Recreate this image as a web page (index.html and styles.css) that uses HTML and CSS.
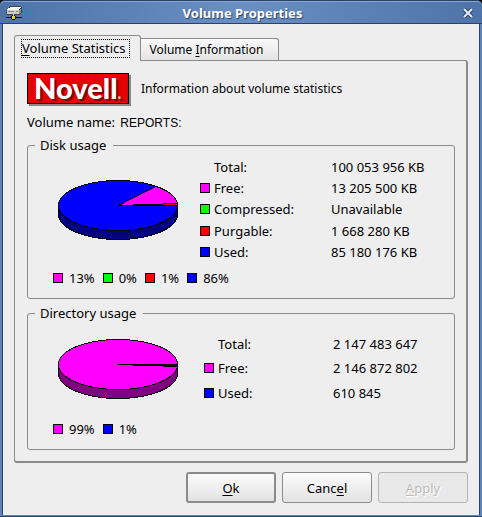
FILE: index.html
```html
<!DOCTYPE html>
<html lang="en">
<head>
<meta charset="utf-8">
<title>Volume Properties</title>
<link rel="stylesheet" href="styles.css">
</head>
<body>
<div class="window">
  <header class="titlebar">
    <svg class="app-icon" width="16" height="14" viewBox="0 0 16 14" shape-rendering="crispEdges" aria-hidden="true">
      <path d="M2 2h1V1h1V0h11v1h1v6h-1v1h-1v1H1V8H0V4h1V3h1z" fill="#444"/>
      <path d="M4 1h11v1h-1v1h-1v1H1V3h1V2h2z" fill="#f4f4f4"/>
      <path d="M1 4h12v4H1z" fill="#cfcfcf"/>
      <path d="M13 4h1V3h1v4h-1v1h-1z" fill="#8a8a8a"/>
      <path d="M2 5h6v1H2z" fill="#888"/>
      <path d="M10 5h2v1h-2z" fill="#0d0"/>
      <path d="M0 11h16v1H0zM6 9h3v1h1v3H9v1H6v-1H5v-3h1z" fill="#111"/>
      <path d="M7 8h1v2H7z" fill="#ccc"/>
      <path d="M6 10h3v3H6z" fill="#e8d820"/>
    </svg>
    <h1>Volume Properties</h1>
    <button class="close" type="button" aria-label="Close">
      <svg width="10" height="10" viewBox="0 0 10 10" aria-hidden="true">
        <path d="M1 1l8 8M9 1l-8 8" stroke="#2c466f" stroke-width="4"/>
        <path d="M1 1l8 8M9 1l-8 8" stroke="#e6ecf6" stroke-width="2"/>
      </svg>
    </button>
  </header>
  <main class="content">
    <div class="tabs" role="tablist">
      <button class="tab active" type="button" role="tab" aria-selected="true"><span class="focus"><u>V</u>olume Statistics</span></button>
      <button class="tab" type="button" role="tab" aria-selected="false">Volume <u>I</u>nformation</button>
    </div>
    <section class="panel">
      <div class="intro">
        <span class="logo">Novell<small>.</small></span>
        <span>Information about volume statistics</span>
      </div>
      <p class="name">Volume name: <span class="volume">REPORTS:</span></p>

      <fieldset class="disk">
        <legend>Disk usage</legend>
        <div class="usage">
          <svg class="pie" width="121" height="60" viewBox="0 0 121 60" shape-rendering="crispEdges" role="img" aria-label="Disk usage chart">
            <path d="M.5 25.5v9a59.500 25 0 0 0 119 0v-9z" fill="#000080" stroke="#000"/>
            <ellipse cx="60" cy="25.500" rx="59.500" ry="25" fill="#00f" stroke="#000"/>
            <path d="M60.500 25.500L98 6.500A59.500 25 0 0 1 119.500 25.500z" fill="#f0f" stroke="#000"/>
            <path d="M75 24h45v2H75z" fill="#000"/>
            <path d="M105 23h15v1h-15z" fill="#000"/>
            <path d="M105 24h14v1h-14z" fill="#f00"/>
          </svg>
          <table>
            <tr><td></td><th scope="row">Total:</th><td>100 053 956 KB</td></tr>
            <tr><td><i class="swatch free"></i></td><th scope="row">Free:</th><td>13 205 500 KB</td></tr>
            <tr><td><i class="swatch compressed"></i></td><th scope="row">Compressed:</th><td>Unavailable</td></tr>
            <tr><td><i class="swatch purgable"></i></td><th scope="row">Purgable:</th><td>1 668 280 KB</td></tr>
            <tr><td><i class="swatch used"></i></td><th scope="row">Used:</th><td>85 180 176 KB</td></tr>
          </table>
        </div>
        <ul class="keys">
          <li><i class="swatch free"></i>13%</li>
          <li><i class="swatch compressed"></i>0%</li>
          <li><i class="swatch purgable"></i>1%</li>
          <li><i class="swatch used"></i>86%</li>
        </ul>
      </fieldset>

      <fieldset class="directory">
        <legend>Directory usage</legend>
        <div class="usage">
          <svg class="pie" width="121" height="60" viewBox="0 0 121 60" shape-rendering="crispEdges" role="img" aria-label="Directory usage chart">
            <path d="M.5 25.5v9a59.500 25 0 0 0 119 0v-9z" fill="#800080" stroke="#000"/>
            <ellipse cx="60" cy="25.500" rx="59.500" ry="25" fill="#f0f" stroke="#000"/>
            <path d="M60 25h60v1H60zM75 26h45v1H75zM105 27h15v1h-15z" fill="#000"/>
            <path d="M105 26h14v1h-14z" fill="#000080"/>
          </svg>
          <table>
            <tr><td></td><th scope="row">Total:</th><td>2 147 483 647</td></tr>
            <tr><td><i class="swatch free"></i></td><th scope="row">Free:</th><td>2 146 872 802</td></tr>
            <tr><td><i class="swatch used"></i></td><th scope="row">Used:</th><td>610 845</td></tr>
          </table>
        </div>
        <ul class="keys">
          <li><i class="swatch free"></i>99%</li>
          <li><i class="swatch used"></i>1%</li>
        </ul>
      </fieldset>
    </section>
    <footer class="buttons">
      <button class="btn default" type="button"><u>O</u>k</button>
      <button class="btn" type="button">Canc<u>e</u>l</button>
      <button class="btn" type="button" disabled><u>A</u>pply</button>
    </footer>
  </main>
</div>
</body>
</html>
```
FILE: styles.css
```css
* { box-sizing: border-box; }
html { background: #000; }
body {
  margin: 0;
  font: 13px/18px "Noto Sans", "Open Sans", sans-serif;
  color: #000;
}
button { font: inherit; color: inherit; margin: 0; }
u { text-underline-offset: 2px; }

.window {
  display: flex;
  flex-direction: column;
  min-height: 100vh;
  background: #5f84b8;
  border: 1px solid #2b4166;
  border-width: 1px 0 1px;
  border-radius: 5px 5px 0 0;
  padding: 0 2px 1px;
}
.titlebar {
  display: flex;
  align-items: center;
  height: 23px;
  padding: 0 9px 0 6px;
  margin: 0 -2px;
  border-top: 1px solid #85a5d6;
  border-bottom: 1px solid #2b4166;
  border-radius: 5px 5px 0 0;
  background: linear-gradient(90deg, #4e73a8, #6a8fc4 50%, #4e73a8);
}
.titlebar h1 {
  flex: 1;
  margin: 0;
  font-size: 13px;
  line-height: 18px;
  text-align: center;
  color: #fff;
  text-shadow: 1px 1px 1px #2c466f;
}
.close { display: flex; padding: 0; border: 0; background: none; }

.content {
  flex: 1;
  padding: 11px 11px 12px;
  background: #eee;
  border: solid #2b4166;
  border-width: 0 1px;
}
.tabs { display: flex; align-items: flex-end; }
.tab {
  height: 22px;
  padding: 0 15px 0 9px;
  border: 1px solid #8b8b8b;
  border-left: 0;
  border-bottom: 0;
  border-radius: 0 3px 0 0;
  background: linear-gradient(#fafafa, #e4e4e4);
  font-size: 12px;
}
.tab.active {
  position: relative;
  height: 26px;
  margin-bottom: -1px;
  padding: 0 10px 0 6px;
  border-left: 1px solid #8b8b8b;
  border-radius: 3px 3px 0 0;
  background: #eee;
  font-size: 13px;
}
.focus { display: block; border: 1px dotted #000; line-height: 17px; padding-right: 3px; }

.panel {
  padding: 12px 11px 11px 12px;
  border: 1px solid #8b8b8b;
  border-right-width: 2px;
  border-bottom-width: 2px;
  border-radius: 0 3px 3px 3px;
}
.intro { display: flex; align-items: center; gap: 12px; font-size: 12px; }
.logo {
  width: 102px;
  height: 31px;
  padding-left: 6px;
  border: 1px solid #000;
  background: repeating-conic-gradient(#f00 0 25%, #c00 0 50%) 0 0 / 2px 2px;
  box-shadow: 2px 2px #888;
  font: 900 29px/27px Lato, sans-serif;
  color: #fff;
  text-shadow: 2px 2px #800000;
}
.logo small { font-size: 16px; color: #ccc; }
.name { margin: 9px 0 4px; }
.volume { margin-left: 2px; font: 12px/18px "Liberation Sans", sans-serif; }

fieldset {
  margin: 0 0 5px;
  padding: 0;
  border: 1px solid #8b8b8b;
  border-radius: 3px;
}
legend { margin-left: 7px; padding: 0 7px 0 5px; }
.usage { display: flex; }
.pie { margin-left: 30px; }
.disk .usage { padding-top: 2px; }
.disk .pie { margin-top: 24px; margin-right: 21px; }
.disk table { height: 107px; }
.directory { margin-bottom: 0; }
.directory .usage { padding-top: 10px; }
.directory .pie { margin-top: 7px; margin-right: 25px; }
.directory table { height: 73px; }

table { border-collapse: collapse; text-align: left; }
td, th { padding: 0; font-weight: normal; line-height: 18px; }
td:first-child { min-width: 14px; }
th { width: 117px; }
.directory th { width: 115px; }
.swatch { display: block; width: 10px; height: 10px; border: 1px solid #000; }
.free { background: #f0f; }
.compressed { background: #0f0; }
.purgable { background: #f00; }
.used { background: #00f; }

.keys {
  display: flex;
  gap: 8px;
  margin: 6px 0 11px 25px;
  padding: 0;
  list-style: none;
}
.directory .keys { margin-top: 15px; }
.keys li { display: flex; align-items: center; gap: 6px; }

.buttons { display: flex; justify-content: flex-end; gap: 6px; margin-top: 9px; }
.btn {
  width: 90px;
  height: 31px;
  padding: 0;
  border: 1px solid #8b8b8b;
  border-radius: 3px;
  background: linear-gradient(#fcfcfc, #e2e2e2);
}
.btn.default { border: 2px solid #8b8b8b; }
.btn:disabled { border-color: #b4b4b4; background: #e9e9e9; color: #bdbdbd; text-shadow: 1px 1px #fff; }
```
